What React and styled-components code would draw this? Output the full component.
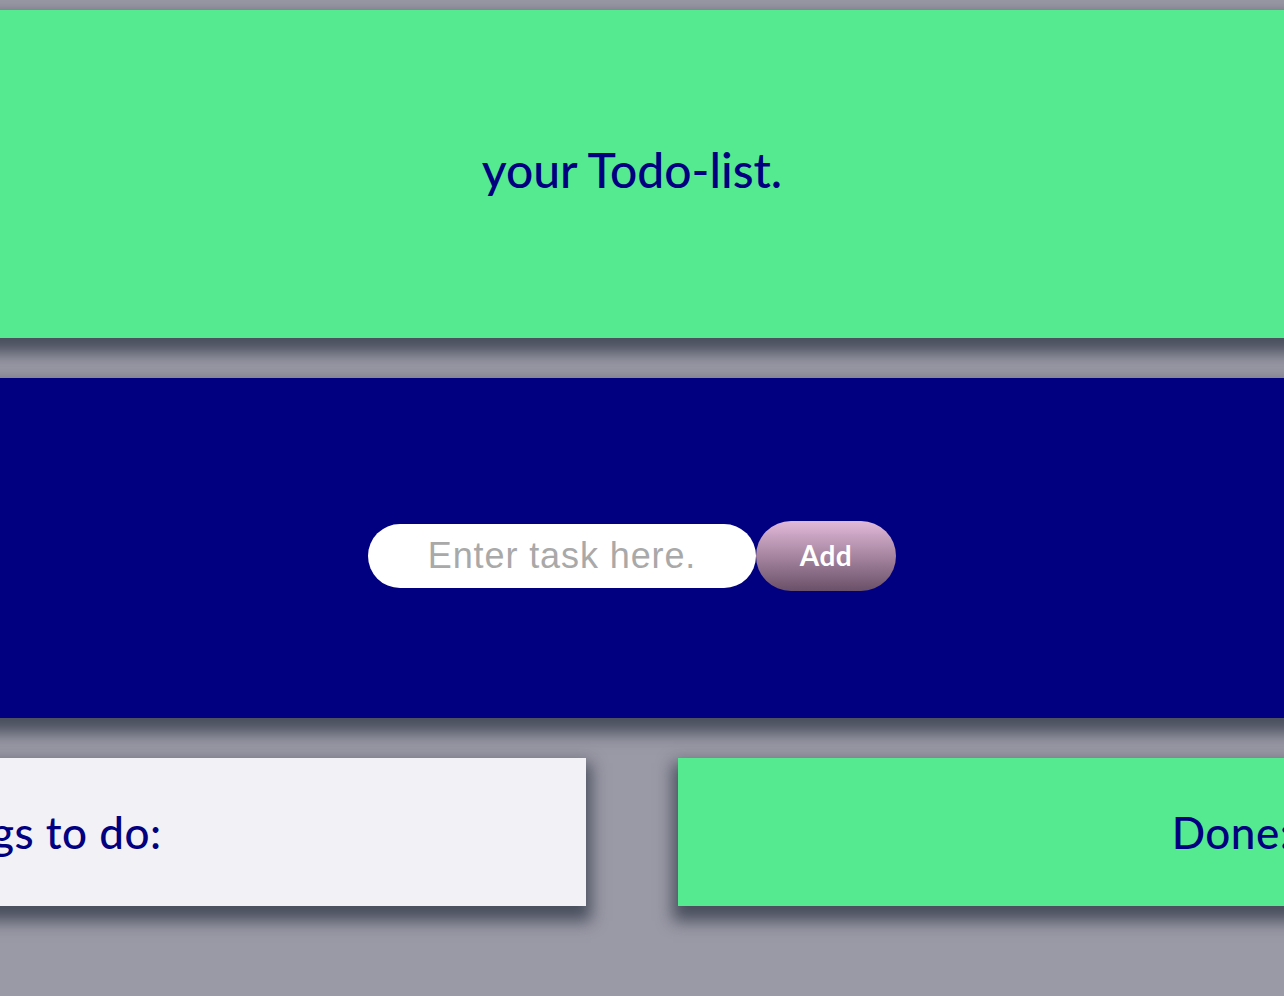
import React, { useState } from "react";
import styled, { createGlobalStyle } from "styled-components";

const GlobalStyle = createGlobalStyle`
  html, body {
    margin: 0;
    padding: 0;
    background: #9a99a6;
    overflow: hidden;
  }
`;

const shadow = "0 10px 15px 5px rgba(30, 40, 55, 0.65)";

export default function App() {
  const [task, setTask] = useState("");

  return (
    <>
      <GlobalStyle />
      <Viewport>
        <Stage>
          <Header>
            <Title>your Todo-list.</Title>
          </Header>
          <Entry>
            <TaskForm onSubmit={(e) => e.preventDefault()}>
              <TaskInput
                type="text"
                value={task}
                onChange={(e) => setTask(e.target.value)}
                placeholder="Enter task here."
              />
              <AddButton type="submit">Add</AddButton>
            </TaskForm>
          </Entry>
          <Lists>
            <ListCard $bg="#f2f1f6">
              <ListTitle>Things to do:</ListTitle>
            </ListCard>
            <ListCard $bg="#55ea8f">
              <ListTitle>Done:</ListTitle>
            </ListCard>
          </Lists>
        </Stage>
      </Viewport>
    </>
  );
}

const Viewport = styled.div`
  width: 1284px;
  height: 996px;
  overflow: hidden;
`;

const Stage = styled.div`
  width: 2326px;
  margin-left: -531px;
  padding-top: 10px;
  display: flex;
  flex-direction: column;
  gap: 40px;
  font-family: "Futura", Lato, "DejaVu Sans", sans-serif;
  color: #000080;
`;

const Header = styled.header`
  height: 328px;
  background: #55ea8f;
  box-shadow: ${shadow};
  display: flex;
  justify-content: center;
  align-items: center;
  position: relative;
  z-index: 2;
`;

const Title = styled.h1`
  margin: 0;
  font-size: 48px;
  font-weight: 500;
  padding-bottom: 10px;
`;

const Entry = styled.section`
  height: 340px;
  background: #000080;
  box-shadow: ${shadow};
  display: flex;
  justify-content: center;
  align-items: center;
  padding-top: 16px;
  box-sizing: border-box;
  position: relative;
  z-index: 1;
`;

const TaskForm = styled.form`
  display: flex;
  align-items: center;
`;

const TaskInput = styled.input`
  width: 388px;
  height: 64px;
  box-sizing: border-box;
  border: none;
  outline: none;
  border-radius: 32px;
  background: #fff;
  font-family: "Liberation Sans", Arial, sans-serif;
  font-size: 36px;
  letter-spacing: 0.9px;
  text-align: center;
  padding: 0 20px;
  color: #333;

  &::placeholder {
    color: #a9a9a9;
  }
`;

const AddButton = styled.button`
  width: 140px;
  height: 70px;
  border: none;
  outline: none;
  border-radius: 35px;
  background: linear-gradient(#e2bad9, #6a5068);
  color: #fff;
  font-family: Lato, sans-serif;
  font-weight: 700;
  font-size: 28px;
  letter-spacing: 0.5px;
  cursor: pointer;
  padding: 0 0 2px;
`;

const Lists = styled.section`
  display: grid;
  grid-template-columns: 1fr 1fr;
  gap: 92px;
  padding: 0 10px;
`;

const ListCard = styled.div`
  height: 148px;
  background: ${(p) => p.$bg};
  box-shadow: ${shadow};
  display: flex;
  justify-content: center;
  align-items: center;
`;

const ListTitle = styled.h2`
  margin: 0;
  font-size: 44px;
  font-weight: 500;
  letter-spacing: 0.5px;
`;
